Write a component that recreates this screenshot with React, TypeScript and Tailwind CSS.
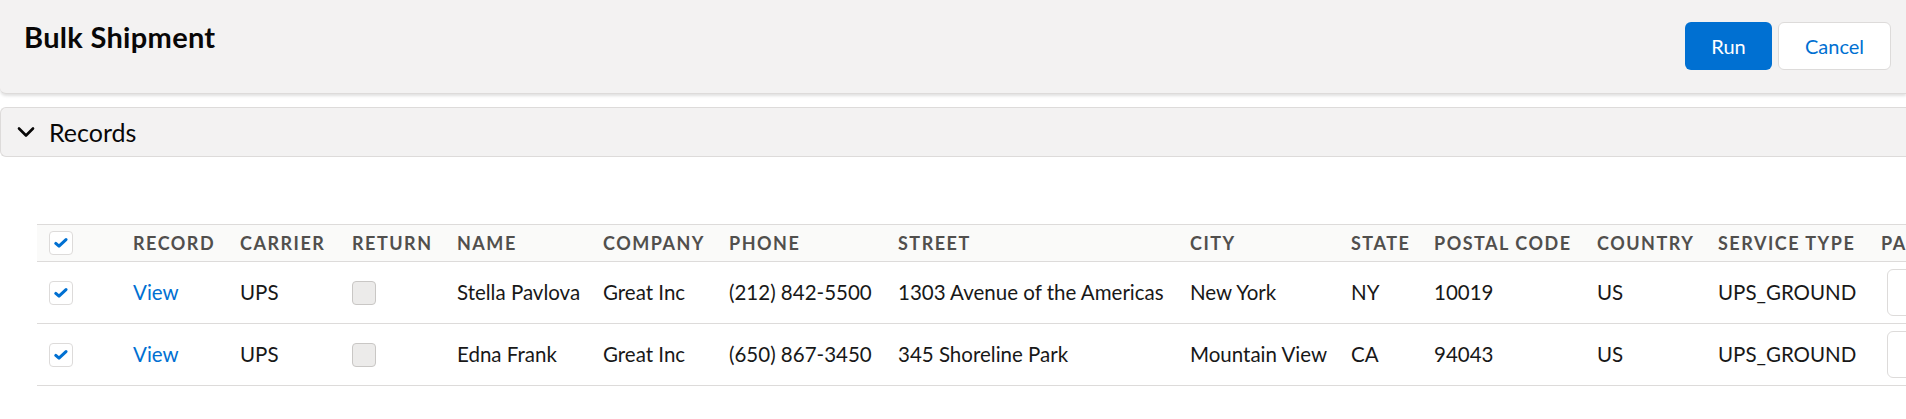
import React from "react";

type Row = {
  name: string;
  phone: string;
  street: string;
  city: string;
  state: string;
  postal: string;
};

const rows: Row[] = [
  { name: "Stella Pavlova", phone: "(212) 842-5500", street: "1303 Avenue of the Americas", city: "New York", state: "NY", postal: "10019" },
  { name: "Edna Frank", phone: "(650) 867-3450", street: "345 Shoreline Park", city: "Mountain View", state: "CA", postal: "94043" },
];

const headers = ["RECORD", "CARRIER", "RETURN", "NAME", "COMPANY", "PHONE", "STREET", "CITY", "STATE", "POSTAL CODE", "COUNTRY", "SERVICE TYPE", "PACKAGE TYPE"];

const grid = "grid grid-cols-[96px_107px_112px_105px_146px_126px_169px_292px_161px_83px_163px_121px_163px_220px]";

const Check = () => (
  <div className="w-[24px] h-[24px] rounded-[4px] border border-[#dddbda] bg-white flex items-center justify-center">
    <svg width="14" height="10" viewBox="0 0 14 10">
      <path d="M1.8 5.4 L5 8.2 L12 1.6" fill="none" stroke="#0070d2" strokeWidth="3" strokeLinecap="round" strokeLinejoin="round" />
    </svg>
  </div>
);

export default function App() {
  return (
    <div className="w-full h-[419px] overflow-hidden bg-white text-[#080707]" style={{ fontFamily: "Lato, 'Liberation Sans', sans-serif" }}>
      <div className="h-[94px] bg-[#f3f2f2] border-b border-[#dddbda] rounded-bl-[6px] shadow-[0_2px_3px_rgba(0,0,0,0.12)] flex items-start justify-between pl-[24px] pr-[15px]">
        <h1 className="mt-[19px] text-[29px] font-bold leading-[36px] tracking-[0.3px]">Bulk Shipment</h1>
        <div className="mt-[22px] flex gap-[6px]">
          <button className="w-[87px] h-[48px] rounded-[6px] bg-[#0070d2] text-white text-[20px]">Run</button>
          <button className="w-[113px] h-[48px] rounded-[6px] bg-white border border-[#dddbda] text-[#0070d2] text-[20px]">Cancel</button>
        </div>
      </div>

      <div className="mt-[13px] h-[50px] bg-[#f3f2f2] border-y border-l border-[#dddbda] rounded-l-[6px] flex items-center">
        <svg className="ml-[16px]" width="18" height="12" viewBox="0 0 18 12">
          <path d="M2 2.5 L9 9.5 L16 2.5" fill="none" stroke="#080707" strokeWidth="2.6" strokeLinecap="round" strokeLinejoin="round" />
        </svg>
        <span className="ml-[14px] text-[25px] leading-none">Records</span>
      </div>

      <div className="mt-[67px] ml-[37px]">
        <div className={`${grid} h-[38px] items-center bg-[#fafaf9] border-y border-[#dddbda]`}>
          <div className="pl-[12px]"><Check /></div>
          {headers.map((h) => (
            <div key={h} className="text-[18px] font-bold tracking-[1.5px] text-[#514f4d] whitespace-nowrap">{h}</div>
          ))}
        </div>
        {rows.map((r) => (
          <div key={r.name} className={`${grid} h-[62px] items-center border-b border-[#dddbda] text-[20.5px] text-[#181818] whitespace-nowrap`}>
            <div className="pl-[12px]"><Check /></div>
            <div className="text-[#0070d2]">View</div>
            <div>UPS</div>
            <div><div className="w-[24px] h-[24px] rounded-[4px] border border-[#c9c7c5] bg-[#ecebea]" /></div>
            <div>{r.name}</div>
            <div>Great Inc</div>
            <div>{r.phone}</div>
            <div>{r.street}</div>
            <div>{r.city}</div>
            <div>{r.state}</div>
            <div>{r.postal}</div>
            <div>US</div>
            <div>UPS_GROUND</div>
            <div className="pl-[6px]"><div className="w-[180px] h-[47px] rounded-[6px] border border-[#dddbda] bg-white" /></div>
          </div>
        ))}
      </div>
    </div>
  );
}
